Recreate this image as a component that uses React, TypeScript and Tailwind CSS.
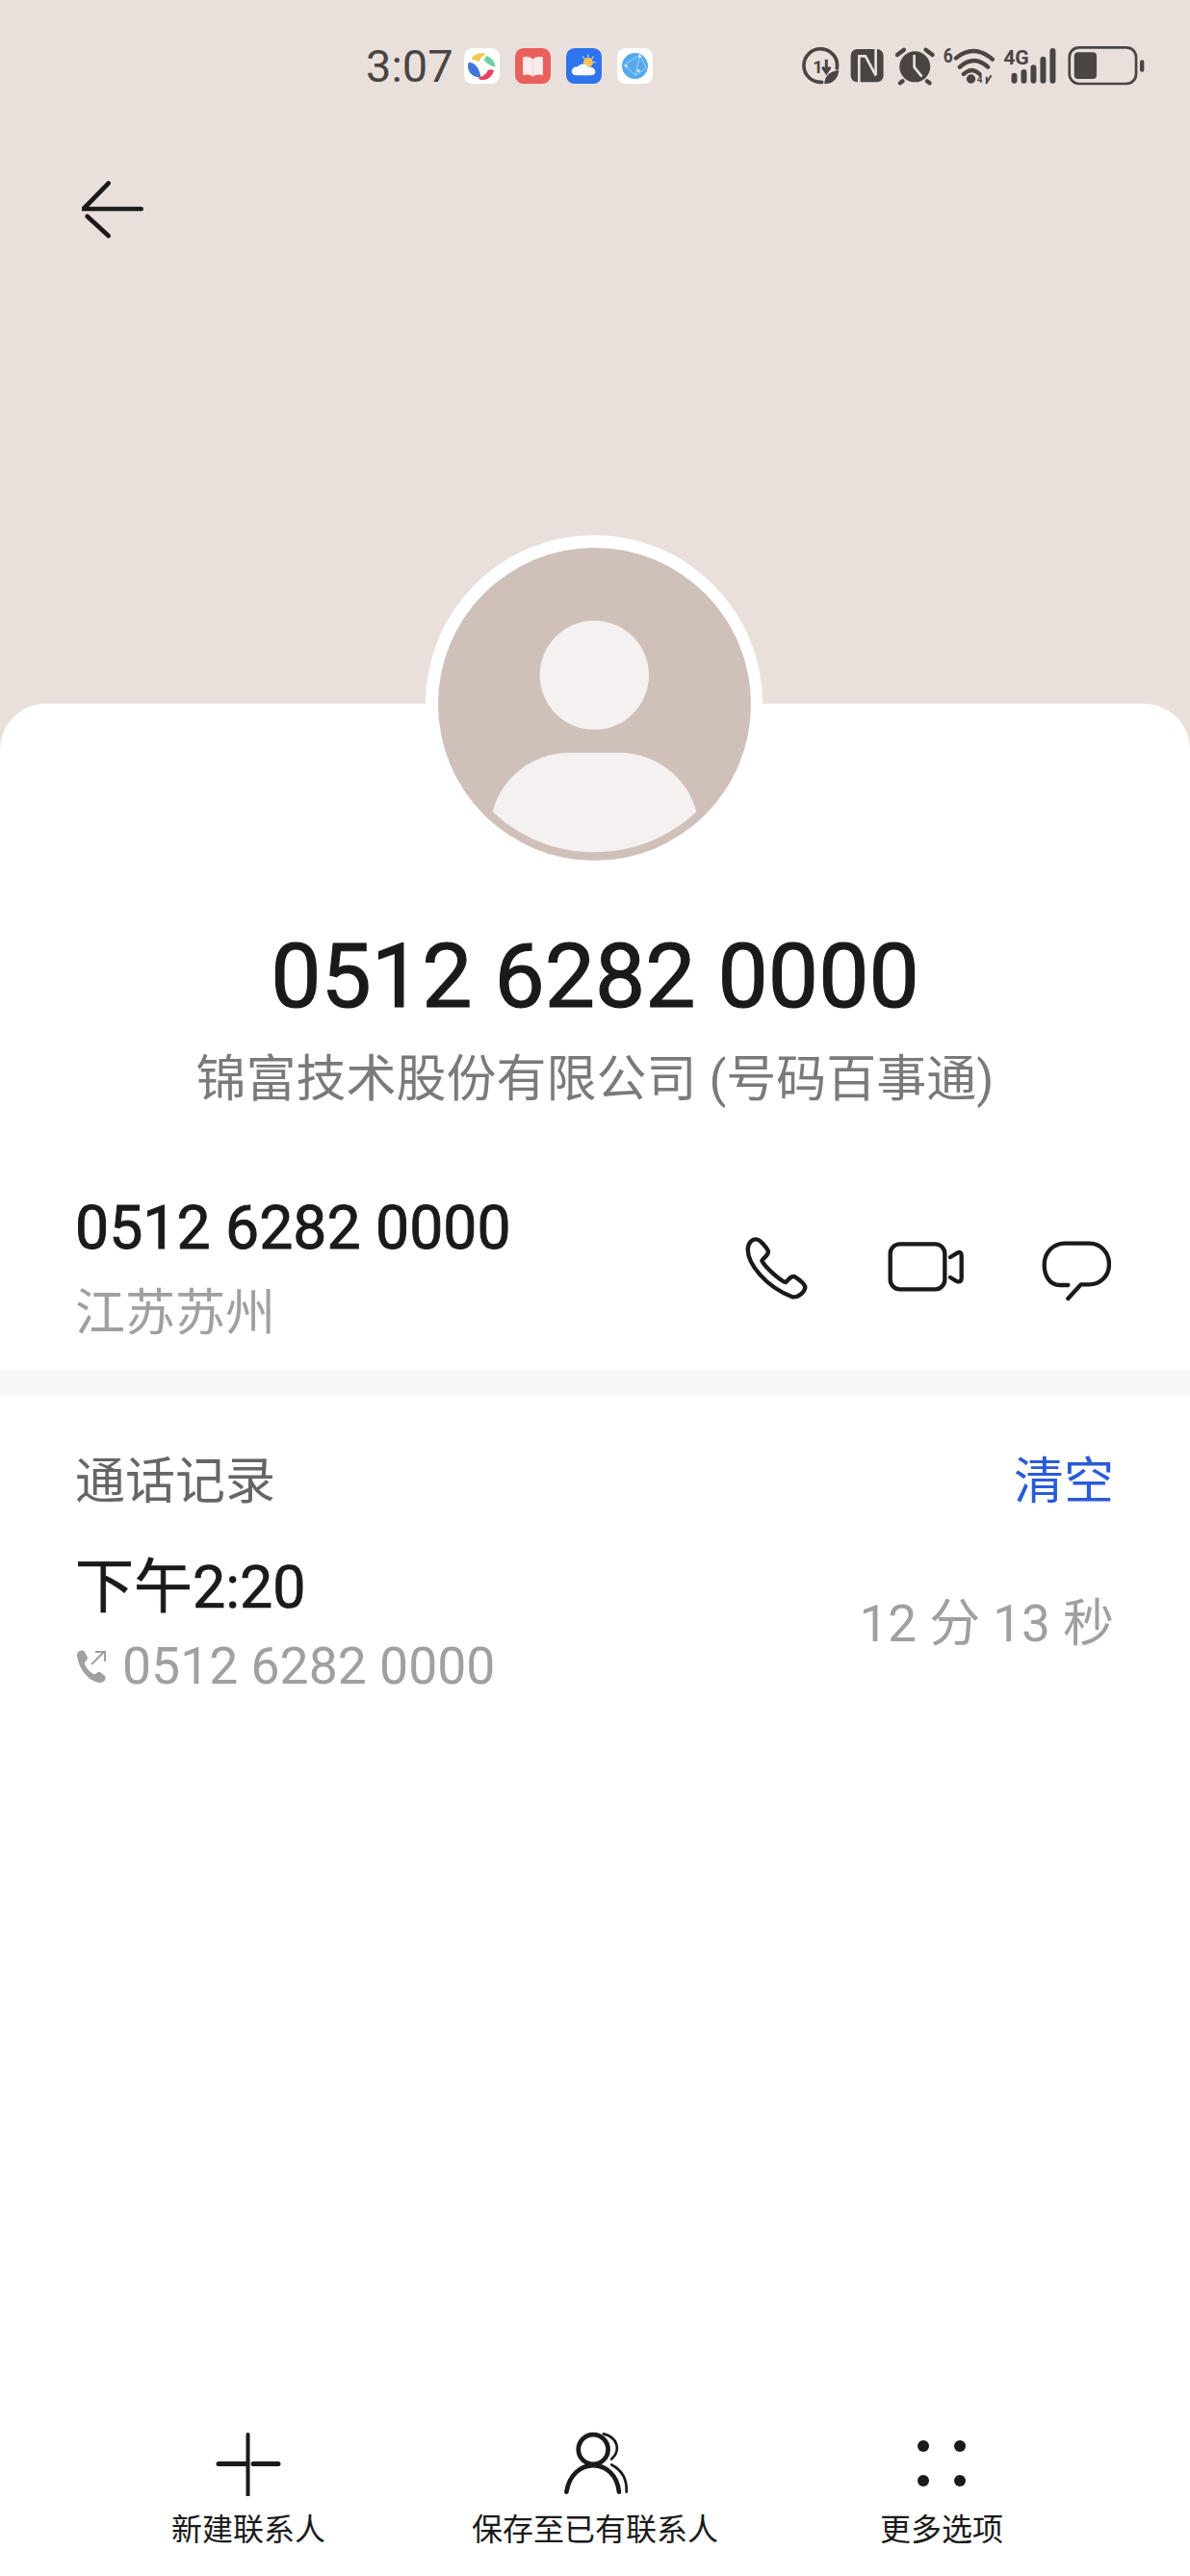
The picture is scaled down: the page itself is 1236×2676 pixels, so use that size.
const FONT = "font-['Roboto','Noto_Sans_CJK_SC',sans-serif]";

function AppIcons() {
  return (
    <div className="flex items-center gap-[16px]">
      <svg width="37" height="37" viewBox="0 0 110 110">
        <rect width="110" height="110" rx="26" fill="#ffffff" />
        <path d="M22 34 C30 18 50 12 68 18 C58 24 50 30 46 42 C38 38 30 36 22 34Z" fill="#f2c84b" />
        <path d="M70 24 C84 28 95 42 97 58 C86 58 74 50 62 38 C64 32 66 28 70 24Z" fill="#6fd0a8" />
        <path d="M14 44 C30 44 46 56 52 90 C32 92 14 78 12 60 C12 54 12 50 14 44Z" fill="#3f78d8" />
        <path d="M92 68 C90 84 76 98 58 98 C50 98 46 96 44 92 C58 88 70 80 74 68 C80 66 86 66 92 68Z" fill="#e5415c" />
      </svg>
      <svg width="37" height="37" viewBox="0 0 110 110">
        <rect width="110" height="110" rx="26" fill="#e9605c" />
        <path d="M24 28 C36 24 46 26 55 34 C64 26 74 24 86 28 V84 C74 80 64 82 55 88 C46 82 36 80 24 84Z" fill="#fdeaea" />
        <path d="M55 34 V88" stroke="#f6c9c8" strokeWidth="2" />
      </svg>
      <svg width="37" height="37" viewBox="0 0 110 110">
        <rect width="110" height="110" rx="26" fill="#2f74ec" />
        <circle cx="68" cy="44" r="15" fill="#f5c453" />
        <path d="M68 20 V26 M90 44 H84 M52 26 L56 32 M84 26 L80 32" stroke="#dfe9f7" strokeWidth="3" strokeLinecap="round" />
        <path d="M30 84 C18 84 14 72 20 64 C24 58 30 56 36 58 C42 46 62 46 68 58 C80 56 92 64 90 74 C90 80 84 84 76 84Z" fill="#f6f9fd" />
      </svg>
      <svg width="37" height="37" viewBox="0 0 110 110">
        <rect width="110" height="110" rx="26" fill="#ffffff" />
        <circle cx="55" cy="55" r="40" fill="#55a9ee" />
        <path d="M22 52 L70 20 L90 62 L56 84 L22 52 M70 20 L56 84" stroke="#cfe6fa" strokeWidth="2" fill="none" />
        <circle cx="70" cy="26" r="4" fill="#e5f2fc" />
        <circle cx="28" cy="55" r="4" fill="#e5f2fc" />
        <circle cx="66" cy="70" r="4" fill="#e5f2fc" />
      </svg>
    </div>
  );
}

function StatusIcons() {
  const c = "#4a4543";
  return (
    <svg width="358" height="44" viewBox="95 75 1075 132" fill="none">
      <path d="M160 193 A52 52 0 1 1 207 150" stroke={c} strokeWidth="11" strokeLinecap="round" />
      <text x="132" y="166" fontSize="54" fontWeight="700" fontFamily="Roboto" fill={c}>1</text>
      <path d="M174 122 V158 M162 146 L174 164 L186 146" stroke={c} strokeWidth="9" />
      <path d="M168 198 C168 172 188 158 213 156 C211 182 193 200 168 198Z" fill={c} />

      <rect x="250" y="90" width="102" height="103" rx="20" fill={c} />
      <path d="M276 196 V112 H296 L328 172 V86" stroke="#e9e0dc" strokeWidth="8" fill="none" />

      <circle cx="450" cy="145" r="48" fill={c} />
      <path d="M395 108 L416 92 M505 108 L484 92 M412 190 L404 196 M488 190 L496 196" stroke={c} strokeWidth="13" strokeLinecap="round" />
      <path d="M448 108 V146 L472 176" stroke="#e9e0dc" strokeWidth="8" />

      <text x="539" y="132" fontSize="62" fontWeight="700" fontFamily="Roboto" textLength="30" lengthAdjust="spacingAndGlyphs" fill={c}>6</text>
      <path d="M578 118 Q634 72 692 122 M590 146 Q634 106 678 146 M602 168 Q628 144 652 168" stroke={c} strokeWidth="13" strokeLinecap="round" />
      <circle cx="625" cy="183" r="14" fill={c} />
      <text x="644" y="196" fontSize="30" fontWeight="700" fontFamily="Roboto" fill={c}>4</text>
      <path d="M674 176 V196 M688 172 L672 198" stroke={c} strokeWidth="6" />

      <text x="726" y="137" fontSize="62" fontWeight="700" fontFamily="Roboto" textLength="80" lengthAdjust="spacingAndGlyphs" fill={c}>4G</text>
      <path d="M760 173 V188 M790 162 V188 M820 148 V188 M850 122 V188 M880 96 V188" stroke={c} strokeWidth="18" strokeLinecap="round" />

      <rect x="932" y="85" width="208" height="113" rx="30" stroke={c} strokeWidth="8" />
      <rect x="947" y="100" width="70" height="83" rx="12" fill={c} />
      <rect x="1152" y="124" width="13" height="37" rx="6" fill={c} />
    </svg>
  );
}

function StatusBar() {
  return (
    <div className="flex h-[136px] items-center pl-[380px] pr-[46px]">
      <span className="text-[47px] leading-none text-[#4a4543]">3:07</span>
      <div className="ml-[11px]">
        <AppIcons />
      </div>
      <div className="ml-auto">
        <StatusIcons />
      </div>
    </div>
  );
}

function Avatar() {
  return (
    <div className="absolute left-[442px] top-[556px] size-[350px] rounded-full bg-white p-[12.5px]">
      <svg className="block size-[325px]" viewBox="163 85 975 975">
        <circle cx="650.5" cy="572.5" r="487.5" fill="#d0c0ba" />
        <circle cx="650" cy="482" r="170" fill="#f5f1f0" />
        <path d="M333 908 C360 800 460 724 570 724 H730 C840 724 940 800 968 908 C880 990 770 1034 648 1034 C530 1034 420 990 333 908Z" fill="#f5f1f0" />
      </svg>
    </div>
  );
}

function ActionIcons() {
  const c = "#1a1a1a";
  return (
    <div className="flex items-center">
      <svg width="68" height="68" viewBox="100 93 204 204" fill="none">
        <path
          d="M140 104 C125 100 112 115 111 135 C112 180 165 250 250 283 C270 285 290 265 290 252 C288 242 270 228 258 220 C248 215 240 225 230 237 C215 235 165 190 155 170 C160 160 175 155 175 140 C170 130 150 105 140 104Z"
          stroke={c}
          strokeWidth="13"
          strokeLinejoin="round"
        />
      </svg>
      <svg className="ml-[81px]" width="80" height="56" viewBox="550 117 240 168" fill="none">
        <rect x="558" y="124" width="170" height="141" rx="30" stroke={c} strokeWidth="13" />
        <path d="M745 165 L768 151 Q780 146 780 160 V230 Q780 245 765 240 L745 228" stroke={c} strokeWidth="13" strokeLinecap="round" />
      </svg>
      <svg className="ml-[80px]" width="72" height="68" viewBox="1028 90 216 204" fill="none">
        <path
          d="M1110 243 H1085 C1050 243 1036 210 1036 180 C1036 140 1065 113 1100 113 H1175 C1215 113 1238 145 1238 178 C1238 215 1210 241 1175 241 H1150 L1110 285"
          stroke={c}
          strokeWidth="13"
          strokeLinecap="round"
          strokeLinejoin="round"
        />
      </svg>
    </div>
  );
}

function BottomAction({ label, icon }: { label: string; icon: React.ReactNode }) {
  return (
    <div className="flex flex-col items-center">
      <div className="flex h-[75px] items-center justify-center">{icon}</div>
      <span className="mt-[12px] text-[32px] leading-[40px] text-[#1a1a1a]">{label}</span>
    </div>
  );
}

const PlusIcon = (
  <svg width="68" height="68" viewBox="0 -2 68 68" fill="none" stroke="#1a1a1a" strokeLinecap="round">
    <path d="M33.5 2 V65" strokeWidth="4" />
    <path d="M3 32.5 H32 M39 32.5 H65" strokeWidth="5" />
  </svg>
);

const PersonIcon = (
  <svg width="75" height="75" viewBox="60 30 224 224" fill="none" stroke="#1a1a1a" strokeLinecap="round">
    <circle cx="165" cy="100" r="46" strokeWidth="14" />
    <path d="M82 232 C90 180 125 150 165 150 C205 150 240 180 245 232" strokeWidth="14" />
    <path d="M197 52 C240 62 252 102 222 130" strokeWidth="8" />
    <path d="M222 148 C255 165 270 195 268 232" strokeWidth="8" />
  </svg>
);

const DotsIcon = (
  <svg width="60" height="60" viewBox="0 0 60 60" fill="#1a1a1a">
    <circle cx="11" cy="12" r="6" />
    <circle cx="49" cy="12" r="6" />
    <circle cx="11" cy="48" r="6" />
    <circle cx="49" cy="48" r="6" />
  </svg>
);

export default function App() {
  return (
    <div className={`relative flex h-[2676px] w-[1236px] flex-col overflow-hidden bg-[#e9e0dc] ${FONT}`}>
      <StatusBar />
      <button className="ml-[85px] mt-[52px] block h-[62px] w-[66px]" aria-label="back">
        <svg width="66" height="62" viewBox="75 85 198 186" fill="none" stroke="#1a1a1a" strokeWidth="14" strokeLinecap="round">
          <path d="M158 92 L80 172 H260" />
          <path d="M92 195 L158 256" />
        </svg>
      </button>

      <main className="mt-[481px] flex flex-1 flex-col rounded-t-[48px] bg-white">
        <div className="flex flex-col items-center pt-[234px]">
          <h1 className="text-[93px] leading-[100px] text-[#1a1a1a] [-webkit-text-stroke:1.2px_#1a1a1a]">0512 6282 0000</h1>
          <p className="mt-[27px] text-[52px] leading-[60px] text-[#7a7a7a]">锦富技术股份有限公司 (号码百事通)</p>
        </div>

        <section className="mt-[88px] flex items-center justify-between pl-[78px] pr-[82px]">
          <div>
            <div className="text-[62.5px] leading-[72px] text-[#1a1a1a] [-webkit-text-stroke:0.9px_#1a1a1a]">0512 6282 0000</div>
            <div className="mt-[23px] text-[52px] leading-[60px] text-[#a0a0a0]">江苏苏州</div>
          </div>
          <ActionIcons />
        </section>

        <div className="mt-[28px] h-[27px] bg-[#f7f7f7]" />

        <section className="flex flex-col pl-[78px] pr-[79px]">
          <div className="mt-[60px] flex items-center justify-between">
            <span className="text-[52px] leading-[60px] text-[#666666]">通话记录</span>
            <span className="text-[52px] leading-[60px] text-[#2a5bd7]">清空</span>
          </div>
          <div className="mt-[43px] flex items-center justify-between">
            <div>
              <div className="text-[61px] leading-[72px] text-[#1a1a1a] [-webkit-text-stroke:0.7px_#1a1a1a]">下午2:20</div>
              <div className="mt-[16px] flex items-center text-[53.5px] leading-[60px] text-[#a0a0a0]">
                <svg className="mr-[13px]" width="36" height="36" viewBox="0 0 36 36" fill="#a0a0a0">
                  <path d="M2 6 C2 2 8 0 10 3 L13 9 C13 12 9 13 10 16 C12 20 15 24 19 26 C22 27 23 23 26 24 L31 28 C33 31 30 35 26 35 C14 34 3 20 2 6Z" />
                  <path d="M17 16 L30 3 M21 3 H31 V13" fill="none" stroke="#a0a0a0" strokeWidth="2" />
                </svg>
                0512 6282 0000
              </div>
            </div>
            <span className="text-[53px] leading-[60px] text-[#a0a0a0]">12 分 13 秒</span>
          </div>
        </section>

        <div className="mt-auto grid grid-cols-3 px-[78px] pb-[28px]">
          <BottomAction label="新建联系人" icon={PlusIcon} />
          <BottomAction label="保存至已有联系人" icon={PersonIcon} />
          <BottomAction label="更多选项" icon={DotsIcon} />
        </div>
      </main>

      <Avatar />
    </div>
  );
}
